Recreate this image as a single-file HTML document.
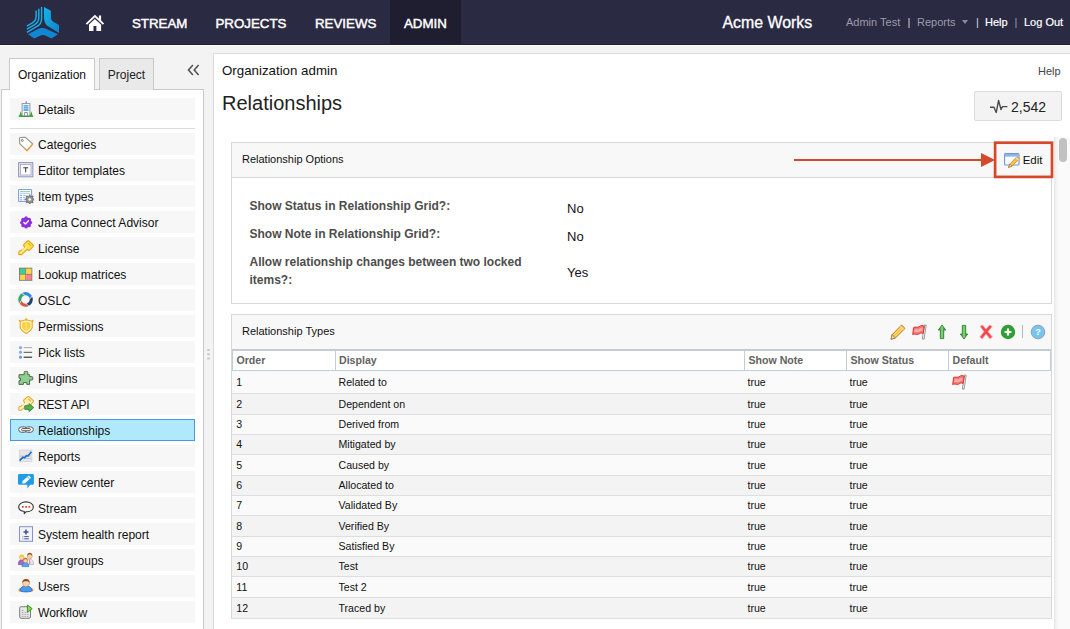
<!DOCTYPE html>
<html lang="en">
<head>
<meta charset="utf-8">
<title>Relationships - Organization admin</title>
<style>
*{box-sizing:border-box;margin:0;padding:0}
html,body{width:1070px;height:629px;overflow:hidden}
body{position:relative;background:#f3f3f3;font-family:"Liberation Sans",sans-serif;color:#222;font-size:13px}
.abs{position:absolute}
/* top nav */
#nav{position:absolute;left:0;top:0;width:1070px;height:45px;background:#2b2a43;border-bottom:1px solid #1f1e3b;box-shadow:0 1px 0 #fff}
#nav .mi{position:absolute;top:0;height:44px;line-height:47px;color:#fff;font-size:13.3px;padding:0 14px;white-space:nowrap;-webkit-text-stroke:.45px #fff}
#nav .mi.act{background:#1f1e31}
#nav .r{position:absolute;top:16px;font-size:11px;line-height:13px;color:#9c9cab;white-space:nowrap}
#nav .r.w{color:#fff;-webkit-text-stroke:.2px #fff}
#nav .r.p{color:#d4d4dc}
/* sidebar */
#tabO{left:9px;top:58px;width:86px;height:32px;background:#fff;border:1px solid #c9c9c9;border-bottom:none;font-size:12px;line-height:32px;text-align:center;color:#111;z-index:2}
#tabP{left:99px;top:58px;width:55px;height:32px;background:#e9e9e9;border:1px solid #c9c9c9;border-bottom:none;font-size:12px;line-height:32px;text-align:center;color:#222}
#side{left:1px;top:89px;width:203px;height:545px;background:#fff;border:1px solid #c9c9c9}
.it{position:absolute;left:10px;width:185px;height:22px;background:#f7f7f7;font-size:12.05px;line-height:24px;padding-left:28px;color:#111;white-space:nowrap}
.it.sel{background:#b0e9fc;border:1px solid #4c98dc;line-height:22px;padding-left:27px}
.it svg{position:absolute;left:8px;top:3px;width:16px;height:16px}
.it.sel svg{left:7px;top:2px}
/* main */
#main{left:213px;top:53px;width:870px;height:590px;background:#fff;border:1px solid #dcdcdc}
.panel{position:absolute;left:231px;width:821px;border:1px solid #d8d8d8;background:#fff}
.ph{position:absolute;left:0;top:0;right:0;background:#f8f8f8;font-size:11px;color:#111}
.lbl{position:absolute;left:249.5px;width:300px;font-weight:bold;font-size:12px;line-height:18.5px;color:#4d4d4d}
.val{position:absolute;left:567px;font-size:13px;line-height:16px;color:#111}
/* grid */
.hc{position:absolute;top:350px;height:21px;background:#fff;border:1px solid #c0cedc;font-size:10.6px;font-weight:bold;color:#626262;line-height:19px;padding-left:3.5px}
.row{position:absolute;left:232px;width:819px;border-bottom:1px solid #dedede;font-size:10.6px;color:#111}
.row span{position:absolute;line-height:13px;white-space:nowrap}
.row .c1{left:4.3px}.row .c2{left:106.5px}.row .c3{left:515.5px}.row .c4{left:617.5px}
.odd{background:#fafafa}.even{background:#f3f3f3}
</style>
</head>
<body>
<div id="nav">
  <svg class="abs" style="left:20px;top:0" width="50" height="45" viewBox="0 0 50 45">
    <defs><linearGradient id="lg1" x1="0" y1="0" x2="1" y2="1"><stop offset="0" stop-color="#14b6ea"/><stop offset="1" stop-color="#0e82ce"/></linearGradient></defs>
    <path d="M24 6.9 L30.9 10.7 L30.9 17.9 Q31.4 21 35 22.8 L39 24.9 L39 32.9 L28.5 26.6 Q24.3 24 24 17.9 Z" fill="url(#lg1)"/>
    <path d="M16.1 10.4 L16.1 16.6 Q16.1 20.6 12.4 22.8 L6.9 26.1 M18.8 8.8 L18.8 17.6 Q18.8 22.4 14.4 24.8 L6.9 29.1 M21.6 7.1 L21.6 18.4 Q21.6 24 16.6 26.7 L6.9 32.3" fill="none" stroke="#18ade6" stroke-width="1.5"/>
    <path d="M7.9 34.3 L18 28.9 Q22.2 27.2 26.5 28.9 L37.9 34.3 L31.5 38.6 L26 35.7 Q22.9 34.3 20 35.7 L14.3 38.6 Z" fill="#1187d4"/>
  </svg>
  <svg class="abs" style="left:85px;top:14px" width="20" height="18" viewBox="0 0 20 18">
    <path d="M9.9 .7 L.7 9.4 L2 10.8 L9.9 3.3 L17.8 10.8 L19.1 9.4 L16.1 6.6 L16.1 1.6 L13.9 1.6 L13.9 4.5 Z" fill="#fff"/>
    <path d="M9.9 4.9 L4 10.5 L4 16.9 L8.5 16.9 L8.5 11.9 L11.4 11.9 L11.4 16.9 L16.1 16.9 L16.1 10.7 Z" fill="#fff"/>
  </svg>
  <div class="mi" style="left:118px">STREAM</div>
  <div class="mi" style="left:201.5px">PROJECTS</div>
  <div class="mi" style="left:301px">REVIEWS</div>
  <div class="mi act" style="left:390px">ADMIN</div>
  <div class="abs" style="left:722.5px;top:12.6px;font-size:15.9px;line-height:20px;color:#fff;-webkit-text-stroke:.3px #fff;white-space:nowrap">Acme Works</div>
  <div class="r" style="left:846px">Admin Test</div>
  <div class="r p" style="left:907.5px">|</div>
  <div class="r" style="left:917px">Reports</div>
  <div class="abs" style="left:961.7px;top:20.3px;width:0;height:0;border-left:3.8px solid transparent;border-right:3.8px solid transparent;border-top:4.8px solid #8a8a9a"></div>
  <div class="r p" style="left:976px">|</div>
  <div class="r w" style="left:985px">Help</div>
  <div class="r p" style="left:1014.5px;color:#9a9aaa">|</div>
  <div class="r w" style="left:1024px">Log Out</div>
</div>

<!-- sidebar -->
<div id="side" class="abs"></div>
<div id="tabO" class="abs">Organization</div>
<div id="tabP" class="abs">Project</div>
<svg class="abs" style="left:187px;top:64px" width="13" height="12" viewBox="0 0 13 12"><path d="M5.9 1 L1.5 6 L5.9 11 M11.6 1 L7.2 6 L11.6 11" fill="none" stroke="#555" stroke-width="1.6"/></svg>
<div class="it" style="top:98px"><svg viewBox="0 0 16 16"><rect x="4.1" y="2.6" width="7.8" height="12.4" fill="#fff" stroke="#8f949c" stroke-width="1"/><rect x="7.7" y=".2" width=".9" height="2" fill="#e03a2e"/><path d="M5.5 4.8h5M5.5 6.9h5M5.5 9h5" stroke="#2f8df0" stroke-width="1.3"/><rect x="6.7" y="11.6" width="2.6" height="3.6" fill="#fff" stroke="#777" stroke-width=".8"/><path d="M2.7 10.2 L4.2 15 L1.2 15Z M13.3 10.2 L14.8 15 L11.8 15Z" fill="#3aa835"/><path d="M.6 15.3h14.8" stroke="#2a8f2a" stroke-width="1"/></svg>Details</div>
<div class="it" style="top:133px"><svg viewBox="0 0 16 16"><path d="M1.5 2.3 Q1.5 1.5 2.4 1.5 L7.4 1.3 L14.8 8 L9 14.6 L1.7 7.6 Z" fill="#fff" stroke="#9c948a" stroke-width="1.1" stroke-linejoin="round"/><path d="M14.8 8 L9 14.6 L6.6 12.3" fill="none" stroke="#f29a3f" stroke-width="1.3" stroke-linejoin="round"/><circle cx="4.3" cy="4.4" r="1" fill="#fff" stroke="#666" stroke-width=".8"/></svg>Categories</div>
<div class="it" style="top:159px"><svg viewBox="0 0 16 16"><rect x=".6" y=".6" width="14.2" height="14.2" fill="#e4e7f2" stroke="#8e97b8" stroke-width="1"/><rect x="2.4" y="2.4" width="10.6" height="10.6" fill="#fff" stroke="#a0a6c0" stroke-width=".8"/><path d="M5.3 5.8h4.8M7.7 5.8v4.6" stroke="#333" stroke-width="1"/></svg>Editor templates</div>
<div class="it" style="top:185px"><svg viewBox="0 0 16 16"><rect x=".6" y="1.5" width="13" height="12" rx=".8" fill="#fff" stroke="#79a6e8" stroke-width="1.1"/><path d="M2 3.7h10.2" stroke="#7cc47a" stroke-width=".9"/><path d="M2 5.5h10.2" stroke="#a9c6f0" stroke-width=".7"/><path d="M2.3 7.4h1.5M2.3 9.6h1.5M2.3 11.8h1.5" stroke="#5f8fe0" stroke-width="1.3"/><path d="M5 7.4h3M5 9.6h2.4M5 11.8h2" stroke="#9dbdf0" stroke-width="1"/><path d="M11.7 6.4v10M6.7 11.4h10M8.2 7.9l7 7M15.2 7.9l-7 7" stroke="#7d7d7d" stroke-width="1.7"/><circle cx="11.7" cy="11.4" r="3.5" fill="#9a9a9a" stroke="#6f6f6f" stroke-width=".8"/><circle cx="11.7" cy="11.4" r="1.6" fill="#fff" stroke="#777" stroke-width=".5"/></svg>Item types</div>
<div class="it" style="top:211px"><svg viewBox="0 0 16 16"><g transform="translate(8.1 8.4)"><circle r="5.2" fill="#8c2ee0"/><g fill="#8c2ee0"><circle cx="0" cy="-4.6" r="1.5"/><circle cx="3.25" cy="-3.25" r="1.5"/><circle cx="4.6" cy="0" r="1.5"/><circle cx="3.25" cy="3.25" r="1.5"/><circle cx="0" cy="4.6" r="1.5"/><circle cx="-3.25" cy="3.25" r="1.5"/><circle cx="-4.6" cy="0" r="1.5"/><circle cx="-3.25" cy="-3.25" r="1.5"/></g><path d="M-2.3 .1 L-.7 1.7 L2.4 -1.6" fill="none" stroke="#fff" stroke-width="1.4" stroke-linecap="round" stroke-linejoin="round"/></g></svg>Jama Connect Advisor</div>
<div class="it" style="top:237px"><svg viewBox="0 0 16 16"><path d="M9.6 1 Q10.2 .4 10.9 1 L15.2 4.8 Q15.8 5.4 15.3 6 L11.8 10.2 Q11.2 10.8 10.5 10.3 L9.2 9.3 L3.6 14.6 L1 14.6 L.7 12 L2 10.6 L2.9 11.2 L3.8 9.8 L4.8 10.4 L6.9 7.6 L5.7 5.6 Q5.3 4.9 5.9 4.4Z" fill="#ffe24d" stroke="#e6a41e" stroke-width="1.1" stroke-linejoin="round"/><path d="M2 13.4 L8.4 7" stroke="#fff4a8" stroke-width="1.3"/><path d="M10.6 3.6 L12.6 5.4" stroke="#e6a41e" stroke-width="1.1" stroke-linecap="round"/></svg>License</div>
<div class="it" style="top:263px"><svg viewBox="0 0 16 16"><rect x="1" y="1.7" width="13.3" height="13.1" fill="#7b7b7b"/><rect x="1.9" y="2.6" width="5.5" height="5.3" fill="#3fcf8e"/><rect x="8" y="2.6" width="5.5" height="5.3" fill="#ffd24d"/><rect x="1.9" y="8.6" width="5.5" height="5.3" fill="#ffd24d"/><rect x="8" y="8.6" width="5.5" height="5.3" fill="#f9838a"/></svg>Lookup matrices</div>
<div class="it" style="top:289px"><svg viewBox="0 0 16 16"><g fill="none" stroke-width="3.1"><path d="M2.27 9.55 A5.75 5.75 0 0 1 5.63 2.00" stroke="#2eaa72"/><path d="M5.63 2.00 A5.75 5.75 0 0 1 13.15 5.91" stroke="#2e86de"/><path d="M13.15 5.91 A5.75 5.75 0 0 1 9.09 12.95" stroke="#27406f"/><path d="M9.09 12.95 A5.75 5.75 0 0 1 2.27 9.55" stroke="#d25a40"/></g><path d="M3.74 7.94 L1.45 11.87" stroke="#f7f7f7" stroke-width=".7"/><path d="M7.19 3.52 L3.35 1.10" stroke="#f7f7f7" stroke-width=".7"/><path d="M11.50 7.33 L14.25 3.72" stroke="#f7f7f7" stroke-width=".7"/><path d="M7.67 11.30 L11.28 14.05" stroke="#f7f7f7" stroke-width=".7"/></svg>OSLC</div>
<div class="it" style="top:315px"><svg viewBox="0 0 16 16"><path d="M2.2 3.2 L8.2 1.7 L14.2 3.2 L14.2 9.4 Q13.6 12.4 8.2 15.5 Q2.8 12.4 2.2 9.4Z" fill="#fff6cf" stroke="#e8a820" stroke-width="1.1" stroke-linejoin="round"/><circle cx="1.7" cy="2.7" r=".95" fill="#e8a820"/><circle cx="8.2" cy="1.3" r=".95" fill="#e8a820"/><circle cx="14.7" cy="2.7" r=".95" fill="#e8a820"/><path d="M4 4.7 L8.2 3.7 L12.4 4.7 L12.4 9.2 Q12 11.4 8.2 13.6 Q4.4 11.4 4 9.2Z" fill="#fbd23c"/><path d="M7.6 3.9 L8.2 3.7 L8.8 3.9 L8.8 13.2 L8.2 13.6 L7.6 13.2Z" fill="#fde98a"/></svg>Permissions</div>
<div class="it" style="top:341px"><svg viewBox="0 0 16 16"><circle cx="2.5" cy="3.6" r="1.2" fill="#8db4f2" stroke="#5d8fe6" stroke-width=".6"/><circle cx="2.5" cy="8.3" r="1.2" fill="#8db4f2" stroke="#5d8fe6" stroke-width=".6"/><circle cx="2.5" cy="13.2" r="1.2" fill="#6f9ff0" stroke="#4a80e0" stroke-width=".6"/><path d="M5.7 3.6h8.4" stroke="#777" stroke-width=".6"/><path d="M5.7 8.3h8.4" stroke="#222" stroke-width=".8"/><path d="M5.7 13.2h8.4" stroke="#111" stroke-width="1"/></svg>Pick lists</div>
<div class="it" style="top:367px"><svg viewBox="0 0 16 16"><path d="M6.2 4.7 L6.2 2.4 Q6.2 1.4 7.2 1.4 L8.8 1.4 Q9.8 1.4 9.8 2.4 L9.8 4.7 L11.6 4.7 L11.6 6.6 L13.8 6.6 Q14.8 6.6 14.8 7.6 L14.8 9 Q14.8 10 13.8 10 L11.6 10 L11.6 14.4 L8.8 14.4 L8.8 12.6 L5.4 12.6 L5.4 14.4 L1 14.4 L1 10.6 L2.6 10.6 L2.6 8.2 L1 8.2 L1 4.7Z" fill="#8fce8f" stroke="#4c6a4c" stroke-width="1" stroke-linejoin="round"/></svg>Plugins</div>
<div class="it" style="top:393px;letter-spacing:-.35px"><svg viewBox="0 0 16 16"><g transform="translate(0 -.4)"><path d="M9.6 1 Q10.2 .4 10.9 1 L15.2 4.8 Q15.8 5.4 15.3 6 L11.8 10.2 Q11.2 10.8 10.5 10.3 L9.2 9.3 L3.6 14.6 L1 14.6 L.7 12 L2 10.6 L2.9 11.2 L3.8 9.8 L4.8 10.4 L6.9 7.6 L5.7 5.6 Q5.3 4.9 5.9 4.4Z" fill="#fff0b0" stroke="#e8aa3c" stroke-width="1.1" stroke-linejoin="round"/><path d="M2 13.4 L8.4 7" stroke="#fffbe0" stroke-width="1.3"/><path d="M10.6 3.6 L12.6 5.4" stroke="#e8aa3c" stroke-width="1.1" stroke-linecap="round"/></g><path d="M6.8 9.8 L11 9.8 L11 7.6 L15.8 11.6 L11 15.6 L11 13.4 L6.8 13.4Z" fill="#56b056" stroke="#2f8a2f" stroke-width=".9" stroke-linejoin="round"/></svg>REST API</div>
<div class="it sel" style="top:419px"><svg viewBox="0 0 16 16"><rect x=".7" y="4.9" width="8.4" height="5.4" rx="2.7" fill="#f4f4f4" stroke="#5f5f5f" stroke-width="1"/><rect x="6.9" y="4.9" width="8.4" height="5.4" rx="2.7" fill="#f4f4f4" stroke="#5f5f5f" stroke-width="1"/><rect x="3.6" y="6.5" width="8.8" height="2.2" rx="1.1" fill="#eee" stroke="#555" stroke-width=".9"/></svg>Relationships</div>
<div class="it" style="top:445px"><svg viewBox="0 0 16 16"><rect x="1.3" y="2.1" width="12.6" height="11.4" fill="#e6e6e6" stroke="#cfcfcf" stroke-width=".7"/><path d="M2 8h11M2 10.6h11" stroke="#bdbdbd" stroke-width=".8"/><path d="M1.6 12.6 L5 9.2 L6.6 9.8 L8.6 7.6 L10 8 L13.4 3.8" fill="none" stroke="#1f6fd0" stroke-width="1.7" stroke-linejoin="round"/></svg>Reports</div>
<div class="it" style="top:471px"><svg viewBox="0 0 16 16"><path d="M1.4 0 H14.5 Q15.9 0 15.9 1.4 V9.4 Q15.9 10.8 14.5 10.8 H12 L9.6 14.4 L9.2 10.8 H1.4 Q0 10.8 0 9.4 V1.4 Q0 0 1.4 0Z" fill="#1f9be8"/><path d="M10.8 1.6 L13 3.8 L7 9.2 L3.6 10 L4.8 6.8Z" fill="#fff"/><path d="M9.4 2.9 L11.6 5.1" stroke="#1f9be8" stroke-width=".8"/><path d="M3.6 10 L4.2 8.4 L5.4 9.6Z" fill="#1f9be8"/></svg>Review center</div>
<div class="it" style="top:497px"><svg viewBox="0 0 16 16"><path d="M8 1.9 C12.2 1.9 15.3 4.2 15.3 7 C15.3 9.8 12.4 11.6 9 11.7 L8.2 11.7 L6.2 13.6 L6.4 11.5 C2.8 11 .7 9.2 .7 7 C.7 4.2 3.8 1.9 8 1.9Z" fill="#fff" stroke="#333" stroke-width="1.1" stroke-linejoin="round"/><rect x="4" y="6" width="1.7" height="1.7" fill="#e8392b"/><rect x="7.2" y="6" width="1.7" height="1.7" fill="#e8392b"/><rect x="10.4" y="6" width="1.7" height="1.7" fill="#e8392b"/></svg>Stream</div>
<div class="it" style="top:523px"><svg viewBox="0 0 16 16"><rect x="1.5" y=".7" width="13" height="14.6" fill="#f1f3fb" stroke="#8a93c2" stroke-width="1"/><path d="M8 3.4v5M5.5 5.9h5" stroke="#3f4c8c" stroke-width="1.5"/><path d="M6.2 10.6h4.6M6.2 12.8h4.6" stroke="#4a568f" stroke-width="1"/><path d="M4.4 10.6h1M4.4 12.8h1" stroke="#7d86b5" stroke-width="1"/></svg>System health report</div>
<div class="it" style="top:549px"><svg viewBox="0 0 16 16"><path d="M8.6 12.4 C8.6 8.6 9.6 7.2 11.6 7.2 C13.8 7.2 15.6 8.6 15.6 12.4Z" fill="#e8e8f0" stroke="#a9a9bf" stroke-width=".7"/><path d="M11.4 7.6 L12 7.6 L12.4 11.6 L11.7 12.2 L11 11.6Z" fill="#e87aa0"/><circle cx="11.7" cy="4.2" r="2.5" fill="#f6d2ac" stroke="#c58a4c" stroke-width=".5"/><path d="M9.1 4 C9.1 1.8 10.3 .8 11.7 .8 C13.2 .8 14.3 1.8 14.3 4 C13.4 2.9 12.6 2.6 11.7 2.6 C10.8 2.6 10 2.9 9.1 4Z" fill="#9a5a20"/><path d="M.4 12.6 C.4 9.2 1.6 7.8 3.8 7.8 C6 7.8 7.2 9.2 7.2 12.6Z" fill="#a565c9" stroke="#7b45a0" stroke-width=".7"/><circle cx="3.8" cy="5.6" r="2.3" fill="#f6d2ac" stroke="#d9a52c" stroke-width=".5"/><path d="M1.3 6.6 C.9 3.8 2.2 2.6 3.8 2.6 C5.4 2.6 6.7 3.8 6.3 6.6 C5.8 5.2 5 4.6 3.8 4.6 C2.6 4.6 1.8 5.2 1.3 6.6Z" fill="#f2c12e"/><path d="M4 14.6 C4 11.8 5.2 10.6 7.4 10.6 C9.6 10.6 10.8 11.8 10.8 14.6Z" fill="#58a5ee" stroke="#3478c8" stroke-width=".7"/><circle cx="7.4" cy="8.6" r="2.2" fill="#f6d2ac" stroke="#c0763a" stroke-width=".5"/><path d="M5.1 8.4 C5.1 6.6 6.1 5.8 7.4 5.8 C8.7 5.8 9.7 6.6 9.7 8.4 C9 7.5 8.3 7.2 7.4 7.2 C6.5 7.2 5.8 7.5 5.1 8.4Z" fill="#c9702a"/></svg>User groups</div>
<div class="it" style="top:575px"><svg viewBox="0 0 16 16"><circle cx="2.3" cy="12" r="1.4" fill="#f0a24a" stroke="#c9772a" stroke-width=".5"/><circle cx="13.7" cy="12" r="1.4" fill="#f0a24a" stroke="#c9772a" stroke-width=".5"/><path d="M2.2 12.4 C2.2 9.4 4.6 8 8 8 C11.4 8 13.8 9.4 13.8 12.4 C13.8 14.4 2.2 14.4 2.2 12.4Z" fill="#4a9af0" stroke="#2a68c0" stroke-width=".8"/><circle cx="8" cy="5" r="3.5" fill="#f8d3aa" stroke="#c98e5a" stroke-width=".6"/><path d="M4.3 4.8 C4.1 2.2 5.8 .9 8 .9 C10.2 .9 11.9 2.2 11.7 4.8 C10.8 3.6 9.6 3.3 8 3.3 C6.4 3.3 5.2 3.6 4.3 4.8Z" fill="#8c4a1c"/></svg>Users</div>
<div class="it" style="top:601px"><svg viewBox="0 0 16 16"><rect x="1.7" y="2.7" width="10.8" height="11.6" rx="1.4" fill="#e9e9e9" stroke="#7d7d7d" stroke-width="1"/><path d="M3.8 6.4h1.6M3.8 8.4h1.6M3.8 10.4h1.6M3.8 12.4h1.6M6.6 8.4h1.6M6.6 10.4h1.6M6.6 12.4h1.6M9.2 10.4h1.4M9.2 12.4h1.4" stroke="#9c9c9c" stroke-width=".9"/><path d="M9.4 1 L14.2 4.7 L9.4 8.4Z" fill="#86d94f" stroke="#3a9a22" stroke-width="1" stroke-linejoin="round"/></svg>Workflow</div>
<div class="abs" style="left:10px;top:128px;width:185px;height:1px;background:#dcdcdc"></div>

<!-- splitter dots -->
<div class="abs" style="left:207.3px;top:348.5px;width:2.4px;height:2.4px;border-radius:50%;background:#cacaca;box-shadow:0 4.2px 0 #cacaca,0 8.4px 0 #cacaca"></div>

<!-- main -->
<div id="main" class="abs"></div>
<div class="abs" style="left:222px;top:63px;font-size:13.3px;line-height:16px;color:#111;white-space:nowrap">Organization admin</div>
<div class="abs" style="left:222px;top:91px;font-size:20px;line-height:24px;color:#222;white-space:nowrap">Relationships</div>
<div class="abs" style="left:1038px;top:65px;font-size:11px;line-height:13px;color:#444">Help</div>
<div class="abs" style="left:974px;top:91px;width:88px;height:30px;background:#f3f3f3;border:1px solid #dcdcdc;border-radius:2px"></div>
<svg class="abs" style="left:989px;top:99px" width="20" height="16" viewBox="0 0 20 16"><path d="M1 8.2 L5 8.2 L7.2 13.5 L9.6 1.5 L12 10.5 L13.4 7.6 L18.4 7.6" fill="none" stroke="#4a4a4a" stroke-width="1.35" stroke-linejoin="round"/></svg>
<div class="abs" style="left:1011px;top:98.6px;font-size:14px;line-height:17px;color:#222">2,542</div>

<!-- panel 1 -->
<div class="panel" style="top:142px;height:162px">
  <div class="ph" style="height:35px;border-bottom:1px solid #d8d8d8;line-height:33px;padding-left:10px">Relationship Options</div>
</div>
<div class="lbl" style="top:196.5px">Show Status in Relationship Grid?:</div>
<div class="val" style="top:200.5px">No</div>
<div class="lbl" style="top:224.5px">Show Note in Relationship Grid?:</div>
<div class="val" style="top:228.5px">No</div>
<div class="lbl" style="top:252.5px">Allow relationship changes between two locked items?:</div>
<div class="val" style="top:264.5px">Yes</div>
<!-- arrow + highlight -->
<div class="abs" style="left:794px;top:158.8px;width:188px;height:2.6px;background:#d5492a"></div>
<div class="abs" style="left:980.5px;top:153px;width:0;height:0;border-top:7.2px solid transparent;border-bottom:7.2px solid transparent;border-left:14.5px solid #d5492a"></div>
<svg class="abs" style="left:990px;top:138px" width="70" height="44" viewBox="0 0 70 44"><rect x="5.1" y="4.7" width="56.9" height="34.2" fill="none" stroke="#d5492a" stroke-width="2.7"/></svg>
<svg class="abs" style="left:1004px;top:152px" width="16" height="16" viewBox="0 0 16 16"><rect x=".6" y="1.6" width="14.4" height="11.4" rx="1" fill="#fdfdfd" stroke="#6d94d6" stroke-width="1.1"/><rect x="1" y="2" width="13.6" height="2.6" fill="#8fb4ec"/><path d="M13.2 4.6 L15.4 6.8 L8 14.2 L4.6 15.4 L5.8 12Z" fill="#f5c34b" stroke="#c6861d" stroke-width=".8" stroke-linejoin="round"/><path d="M5.8 12 L4.6 15.4 L8 14.2Z" fill="#f3dcc0" stroke="#9a6a3a" stroke-width=".6"/><path d="M12.2 5.6 L14.4 7.8" stroke="#e8e8e8" stroke-width="1.2"/></svg>
<div class="abs" style="left:1022.7px;top:152.6px;font-size:11.5px;line-height:14px;color:#111">Edit</div>
<!-- scrollbar -->
<div class="abs" style="left:1054px;top:137px;width:16px;height:500px;background:linear-gradient(to right,#e4e4e4 0,#f3f3f3 2px,#fafafa 5px)"></div>
<div class="abs" style="left:1059px;top:138px;width:8px;height:24px;border-radius:4px;background:#c1c1c1"></div>
<!-- panel 2 -->
<div class="panel" style="top:314px;height:305px;background:#f8f8f8">
  <div class="ph" style="height:34px;line-height:33px;padding-left:10px">Relationship Types</div>
</div>
<div class="abs" id="tb">
<svg width="0" height="0" style="position:absolute"><defs><linearGradient id="ga" x1="0" y1="0" x2="1" y2="0"><stop offset=".2" stop-color="#3a9a3a"/><stop offset=".5" stop-color="#96d88a"/><stop offset=".8" stop-color="#2f8f30"/></linearGradient></defs></svg>
<svg class="abs" style="left:890px;top:324px" width="16" height="16" viewBox="0 0 16 16"><path d="M11.6 1 L15 4.4 L5.4 14 L1 15.2 L2.2 10.6Z" fill="#f6c648" stroke="#b9801c" stroke-width="1" stroke-linejoin="round"/><path d="M2.2 10.6 L1 15.2 L5.4 14Z" fill="#f2dcc0" stroke="#8a6a3a" stroke-width=".7"/><path d="M10.4 2.4 L13.6 5.6" stroke="#e6d9b8" stroke-width="1.2"/><path d="M3.6 10.8 L11 3.4 M5 12.4 L12.4 5" stroke="#fbe6a0" stroke-width=".8"/></svg>
<svg class="abs" style="left:912px;top:324px" width="16" height="16" viewBox="0 0 16 16"><path d="M12.5 .9 L14.2 1.3 L12 15.3 L10.3 15Z" fill="#f2f2f2" stroke="#848484" stroke-width=".8" stroke-linejoin="round"/><path d="M1.6 3.6 C3.2 2.4 4.4 3.6 6 3.2 C7.6 2.8 8.2 1.6 9.8 1.6 C10.8 1.6 11.4 2 12.2 2.2 L11.2 9.4 C10.2 9 9.4 8.8 8.4 9.2 C7 9.8 6.4 10.6 4.8 10.4 C3.4 10.2 2.4 9.6 .7 10.6Z" fill="#f47a78" stroke="#e0302c" stroke-width="1" stroke-linejoin="round"/><path d="M2.6 5.6 C4 4.8 5 5.8 6.6 5.2 C8 4.6 8.8 3.8 10.6 4.2 L10.2 7 C8.6 6.6 7.8 7.4 6.4 8 C4.8 8.6 3.8 7.6 2.2 8.4Z" fill="#fbb0ac"/>
</svg>
<svg class="abs" style="left:934px;top:324px" width="16" height="16" viewBox="0 0 16 16"><path d="M8 1 L11.7 6 L9.7 6 L9.7 14.6 L6.3 14.6 L6.3 6 L4.3 6Z" fill="url(#ga)" stroke="#2f8a30" stroke-width=".9" stroke-linejoin="round"/></svg>
<svg class="abs" style="left:956px;top:324px" width="16" height="16" viewBox="0 0 16 16"><path d="M8 15 L11.7 10 L9.7 10 L9.7 1.4 L6.3 1.4 L6.3 10 L4.3 10Z" fill="url(#ga)" stroke="#2f8a30" stroke-width=".9" stroke-linejoin="round"/></svg>
<svg class="abs" style="left:978px;top:324px" width="16" height="16" viewBox="0 0 16 16"><path d="M2.6 3 L5 2.2 L8 5.8 L11.2 2 L13.6 3.2 L9.8 8 L13.8 12.8 L11.6 14.4 L8 10.2 L4.6 14.4 L2.4 12.8 L6.2 8Z" fill="#f0484e" stroke="#f7a0a2" stroke-width=".7" stroke-linejoin="round" transform="translate(8 8) scale(1.1) translate(-8 -8.3)"/></svg>
<svg class="abs" style="left:1000px;top:324px" width="16" height="16" viewBox="0 0 16 16"><circle cx="8" cy="8" r="7.2" fill="#2f9e33"/><path d="M8 4.6v6.8M4.6 8h6.8" stroke="#fff" stroke-width="2.2"/></svg>
<div class="abs" style="left:1022px;top:325px;width:1px;height:13px;background:#b9b9b9"></div>
<svg class="abs" style="left:1030px;top:324px" width="16" height="16" viewBox="0 0 16 16"><circle cx="8" cy="8" r="6.8" fill="#74c6f2" stroke="#9a9ea6" stroke-width="1"/><text x="8" y="11.2" font-family="Liberation Sans, sans-serif" font-size="9" font-weight="bold" fill="#fff" text-anchor="middle">?</text></svg>
</div>
<!-- grid header -->
<div class="abs" style="left:232px;top:349px;width:819px;height:22px;background:#fff;border-top:1px solid #c4c8cc"></div>
<div class="hc" style="left:232px;width:103.5px">Order</div>
<div class="hc" style="left:334.5px;width:410.5px">Display</div>
<div class="hc" style="left:744px;width:103px">Show Note</div>
<div class="hc" style="left:846px;width:103px">Show Status</div>
<div class="hc" style="left:948px;width:103px">Default</div>
<div class="row odd" style="top:371px;height:23px"><span class="c1" style="top:4.9px">1</span><span class="c2" style="top:4.9px">Related to</span><span class="c3" style="top:4.9px">true</span><span class="c4" style="top:4.9px">true</span><svg style="position:absolute;left:719.7px;top:2.9px" width="16" height="16" viewBox="0 0 16 16"><path d="M12.5 .9 L14.2 1.3 L12 15.3 L10.3 15Z" fill="#f2f2f2" stroke="#848484" stroke-width=".8" stroke-linejoin="round"/><path d="M1.6 3.6 C3.2 2.4 4.4 3.6 6 3.2 C7.6 2.8 8.2 1.6 9.8 1.6 C10.8 1.6 11.4 2 12.2 2.2 L11.2 9.4 C10.2 9 9.4 8.8 8.4 9.2 C7 9.8 6.4 10.6 4.8 10.4 C3.4 10.2 2.4 9.6 .7 10.6Z" fill="#f47a78" stroke="#e0302c" stroke-width="1" stroke-linejoin="round"/><path d="M2.6 5.6 C4 4.8 5 5.8 6.6 5.2 C8 4.6 8.8 3.8 10.6 4.2 L10.2 7 C8.6 6.6 7.8 7.4 6.4 8 C4.8 8.6 3.8 7.6 2.2 8.4Z" fill="#fbb0ac"/></svg></div>
<div class="row even" style="top:394px;height:21px"><span class="c1" style="top:3.8px">2</span><span class="c2" style="top:3.8px">Dependent on</span><span class="c3" style="top:3.8px">true</span><span class="c4" style="top:3.8px">true</span></div>
<div class="row odd" style="top:415px;height:20px"><span class="c1" style="top:2.8px">3</span><span class="c2" style="top:2.8px">Derived from</span><span class="c3" style="top:2.8px">true</span><span class="c4" style="top:2.8px">true</span></div>
<div class="row even" style="top:435px;height:20px"><span class="c1" style="top:2.8px">4</span><span class="c2" style="top:2.8px">Mitigated by</span><span class="c3" style="top:2.8px">true</span><span class="c4" style="top:2.8px">true</span></div>
<div class="row odd" style="top:455px;height:21px"><span class="c1" style="top:3.8px">5</span><span class="c2" style="top:3.8px">Caused by</span><span class="c3" style="top:3.8px">true</span><span class="c4" style="top:3.8px">true</span></div>
<div class="row even" style="top:476px;height:20px"><span class="c1" style="top:2.8px">6</span><span class="c2" style="top:2.8px">Allocated to</span><span class="c3" style="top:2.8px">true</span><span class="c4" style="top:2.8px">true</span></div>
<div class="row odd" style="top:496px;height:20px"><span class="c1" style="top:2.8px">7</span><span class="c2" style="top:2.8px">Validated By</span><span class="c3" style="top:2.8px">true</span><span class="c4" style="top:2.8px">true</span></div>
<div class="row even" style="top:516px;height:21px"><span class="c1" style="top:3.8px">8</span><span class="c2" style="top:3.8px">Verified By</span><span class="c3" style="top:3.8px">true</span><span class="c4" style="top:3.8px">true</span></div>
<div class="row odd" style="top:537px;height:20px"><span class="c1" style="top:2.8px">9</span><span class="c2" style="top:2.8px">Satisfied By</span><span class="c3" style="top:2.8px">true</span><span class="c4" style="top:2.8px">true</span></div>
<div class="row even" style="top:557px;height:20px"><span class="c1" style="top:2.8px">10</span><span class="c2" style="top:2.8px">Test</span><span class="c3" style="top:2.8px">true</span><span class="c4" style="top:2.8px">true</span></div>
<div class="row odd" style="top:577px;height:21px"><span class="c1" style="top:3.8px">11</span><span class="c2" style="top:3.8px">Test 2</span><span class="c3" style="top:3.8px">true</span><span class="c4" style="top:3.8px">true</span></div>
<div class="row even" style="top:598px;height:21px"><span class="c1" style="top:3.8px">12</span><span class="c2" style="top:3.8px">Traced by</span><span class="c3" style="top:3.8px">true</span><span class="c4" style="top:3.8px">true</span></div>

</body>
</html>
